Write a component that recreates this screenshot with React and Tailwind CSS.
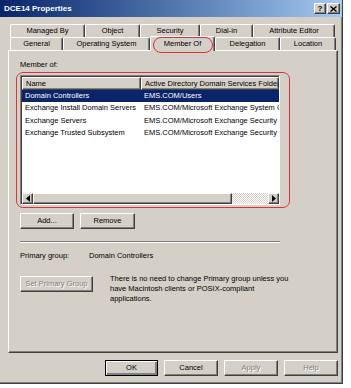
import React from 'react';

const raised = 'border border-white border-r-[#404040] border-b-[#404040] shadow-[inset_-1px_-1px_0_#808080]';

function Btn({ children, className = '', disabled = false, isDefault = false }) {
  return (
    <div
      className={`flex items-center justify-center bg-[#d4d0c8] ${
        isDefault ? 'border border-black shadow-[inset_1px_1px_0_#fff,inset_-2px_-2px_0_#808080]' : raised
      } ${disabled ? 'text-[#808080] [text-shadow:1px_1px_0_#fff]' : 'text-black'} ${className}`}
    >
      {children}
    </div>
  );
}

function Tab({ label, w, selected = false }) {
  return (
    <div
      className={`relative flex items-center justify-center bg-[#d4d0c8] border-t border-l border-white border-r border-r-[#404040] shadow-[inset_-1px_0_0_#808080] rounded-t-[2px] ${
        selected ? 'z-10 -mt-[2px] h-[15px] -mb-px' : 'h-[13px]'
      }`}
      style={{ width: w }}
    >
      {label}
    </div>
  );
}

const rows = [
  ['Domain Controllers', 'EMS.COM/Users'],
  ['Exchange Install Domain Servers', 'EMS.COM/Microsoft Exchange System Objects'],
  ['Exchange Servers', 'EMS.COM/Microsoft Exchange Security Groups'],
  ['Exchange Trusted Subsystem', 'EMS.COM/Microsoft Exchange Security Groups'],
];

export default function App() {
  return (
    <div className="w-[351px] h-[388px] bg-white font-['Liberation_Sans',Arial,sans-serif] text-[7.5px] leading-[10px] text-black overflow-hidden">
      <div className="w-[343px] h-[384px] bg-[#d4d0c8] border-r border-b border-[#404040] shadow-[inset_-1px_-1px_0_#808080] flex flex-col">
        {/* title bar */}
        <div className="h-[17px] shrink-0 flex items-center justify-between pl-[4px] pr-[2px] bg-gradient-to-r from-[#0a246a] to-[#a6caf0]">
          <span className="text-white font-bold text-[8px]">DCE14 Properties</span>
          <div className="flex">
            <Btn className="w-[12px] h-[11px] font-bold text-[8px] leading-none">?</Btn>
            <Btn className="ml-px w-[13px] h-[11px]">
              <svg width="7" height="6" viewBox="0 0 7 6">
                <path d="M0.5 0.5 L6.5 5.5 M6.5 0.5 L0.5 5.5" stroke="#000" strokeWidth="1.4" />
              </svg>
            </Btn>
          </div>
        </div>

        {/* tabs */}
        <div className="mt-[7px] pl-[10px] flex flex-col">
          <div className="flex">
            <Tab label="Managed By" w={75} />
            <Tab label="Object" w={55} />
            <Tab label="Security" w={60} />
            <Tab label="Dial-in" w={53} />
            <Tab label="Attribute Editor" w={82} />
          </div>
          <div className="flex items-end h-[13px]">
            <Tab label="General" w={53} />
            <Tab label="Operating System" w={87} />
            <div className="relative">
              <Tab label="Member Of" w={65} selected />
              <div className="absolute z-20 left-[3px] top-[-1px] w-[60px] h-[16px] border border-[#e0303a] rounded-[8px] pointer-events-none" />
            </div>
            <Tab label="Delegation" w={65} />
            <Tab label="Location" w={56} />
          </div>
        </div>

        {/* panel */}
        <div className="ml-[8px] w-[330px] h-[303px] border border-white border-r-[#404040] border-b-[#404040] shadow-[inset_-1px_-1px_0_#808080] pl-[7px] pt-[9px] flex flex-col">
          <div className="pl-[4px]">Member of:</div>
          <div className="mt-[2px] w-[274px] h-[136px] border border-[#e0303a] rounded-[7px] pl-[3px] pt-[2px]">
            <div className="w-[260px] h-[130px] bg-white border border-[#808080] border-r-white border-b-white shadow-[inset_1px_1px_0_#404040] pl-px pt-px flex flex-col overflow-hidden">
              <div className="flex h-[13px] shrink-0">
                <div className={`w-[119px] pl-[3px] flex items-center ${raised} bg-[#d4d0c8]`}>Name</div>
                <div className={`flex-1 pl-[3px] flex items-center whitespace-nowrap overflow-hidden ${raised} bg-[#d4d0c8]`}>
                  Active Directory Domain Services Folder
                </div>
              </div>
              <div className="flex-1">
                {rows.map(([n, f], i) => (
                  <div
                    key={n}
                    className={`flex h-[12.3px] items-center whitespace-nowrap ${i === 0 ? 'bg-[#0a246a] text-white' : ''}`}
                  >
                    <div className="w-[119px] pl-[3px] overflow-hidden">{n}</div>
                    <div className="flex-1 pl-[3px] overflow-hidden">{f}</div>
                  </div>
                ))}
              </div>
              {/* horizontal scrollbar */}
              <div className="h-[11px] shrink-0 flex bg-[repeating-conic-gradient(#d4d0c8_0_25%,#fff_0_50%)] bg-[length:2px_2px]">
                <Btn className="w-[11px] h-[11px]">
                  <svg width="4" height="7" viewBox="0 0 4 7"><path d="M4 0 L0 3.5 L4 7Z" fill="#000" /></svg>
                </Btn>
                <Btn className="w-[199px] h-[11px]" />
                <div className="flex-1" />
                <Btn className="w-[11px] h-[11px]">
                  <svg width="4" height="7" viewBox="0 0 4 7"><path d="M0 0 L4 3.5 L0 7Z" fill="#000" /></svg>
                </Btn>
              </div>
            </div>
          </div>

          <div className="mt-[5px] pl-[4px] flex gap-[6px]">
            <Btn className="w-[54px] h-[16px]">Add...</Btn>
            <Btn className="w-[55px] h-[16px]">Remove</Btn>
          </div>

          <div className="mt-[12px] ml-[4px] w-[260px] border-t border-[#808080] border-b border-b-white" />

          <div className="mt-[8px] pl-[4px] flex">
            <span className="w-[69px]">Primary group:</span>
            <span>Domain Controllers</span>
          </div>

          <div className="mt-[13px] pl-[4px] flex">
            <Btn disabled className="w-[73px] h-[16px] mt-[2px] shrink-0">Set Primary Group</Btn>
            <div className="ml-[17px] w-[180px] leading-[10px]">
              There is no need to change Primary group unless you have Macintosh clients or POSIX-compliant applications.
            </div>
          </div>
        </div>

        {/* bottom buttons */}
        <div className="mt-[7px] pl-[105px] flex gap-[6px]">
          <Btn isDefault className="w-[53px] h-[16px]">OK</Btn>
          <Btn className="w-[54px] h-[16px]">Cancel</Btn>
          <Btn disabled className="w-[54px] h-[16px]">Apply</Btn>
          <Btn disabled className="w-[54px] h-[16px]">Help</Btn>
        </div>
      </div>
    </div>
  );
}
